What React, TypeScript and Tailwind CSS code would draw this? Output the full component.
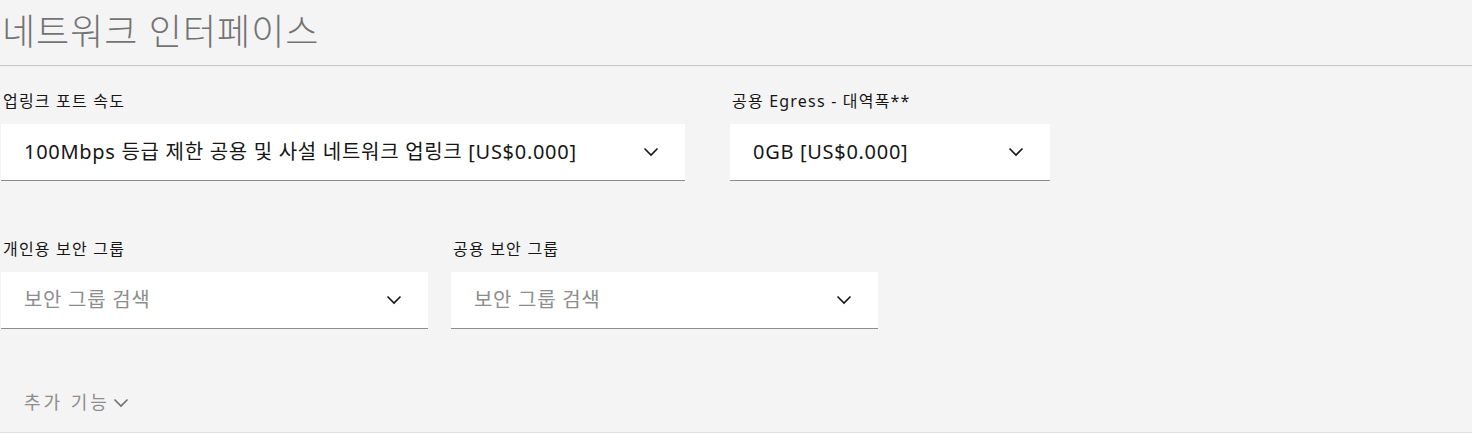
import React from "react";

const font = { fontFamily: '"Noto Sans", "Noto Sans CJK KR", sans-serif' };

function Chevron({ className = "" }: { className?: string }) {
  return (
    <svg width="16" height="10" viewBox="0 0 16 10" className={className} fill="none">
      <polyline points="1.5,1.5 8,8 14.5,1.5" stroke="currentColor" strokeWidth="1.6" />
    </svg>
  );
}

function Select({ value, placeholder, width }: { value?: string; placeholder?: string; width: string }) {
  return (
    <div className={`${width} h-[57px] bg-white border-b border-[#8d8d8d] flex items-center justify-between pl-[23px] pr-[26px]`}>
      <span className={`text-[20px] tracking-[0.7px] ${value ? "text-[#161616]" : "text-[#8d8d8d]"}`}>{value ?? placeholder}</span>
      <Chevron className="text-[#161616]" />
    </div>
  );
}

function Field({ label, children }: { label: string; children: React.ReactNode }) {
  return (
    <div className="flex flex-col">
      <label className="text-[16px] tracking-[1.2px] leading-5 text-[#161616] pl-[2px] mb-[13px]">{label}</label>
      {children}
    </div>
  );
}

export default function App() {
  return (
    <div style={font} className="w-full h-[433px] bg-[#f4f4f4] overflow-hidden">
      <div className="h-[66px] border-b border-[#c6c6c6] flex items-center pl-[2px]">
        <h1 className="text-[36px] tracking-[1px] font-light text-[#737373] leading-none -mt-[1px]">네트워크 인터페이스</h1>
      </div>

      <div className="pl-[1px]">
        <div className="flex gap-[45px] mt-[25px]">
          <Field label="업링크 포트 속도">
            <Select width="w-[684px]" value="100Mbps 등급 제한 공용 및 사설 네트워크 업링크 [US$0.000]" />
          </Field>
          <Field label="공용 Egress - 대역폭**">
            <Select width="w-[320px]" value="0GB [US$0.000]" />
          </Field>
        </div>

        <div className="flex gap-[23px] mt-[58px]">
          <Field label="개인용 보안 그룹">
            <Select width="w-[427px]" placeholder="보안 그룹 검색" />
          </Field>
          <Field label="공용 보안 그룹">
            <Select width="w-[427px]" placeholder="보안 그룹 검색" />
          </Field>
        </div>

        <button className="mt-[61px] ml-[23px] flex items-center gap-[3px] text-[18px] tracking-[3px] leading-6 text-[#8d8d8d]">
          추가 기능
          <Chevron className="w-[16px] h-[10px] mt-[2px] text-[#6f6f6f]" />
        </button>
      </div>
      <div className="mt-[18px] border-b border-[#e0e0e0]" />
    </div>
  );
}
